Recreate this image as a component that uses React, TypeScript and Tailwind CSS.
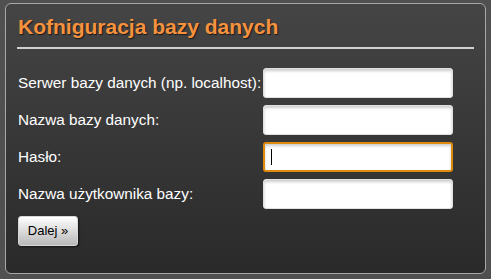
import React from "react";

const rows = [
  { label: "Serwer bazy danych (np. localhost):", focus: false },
  { label: "Nazwa bazy danych:", focus: false },
  { label: "Hasło:", focus: true },
  { label: "Nazwa użytkownika bazy:", focus: false },
];

export default function App() {
  return (
    <div className="w-[491px] h-[279px] bg-[#505050] pt-[3px] pl-[5px] pr-[5px] pb-[5px]" style={{ fontFamily: '"Liberation Sans", Arial, sans-serif' }}>
      <div className="w-full h-full rounded-[6px] border border-[#a8a8a8] bg-gradient-to-b from-[#454545] to-[#2a2a2a] pl-[11px] pr-[11px] pt-[9px]">
        <h1 className="text-[21px] font-bold text-[#f6923e] leading-[28px] pl-[1px] [text-shadow:1px_1px_1px_#1a1a1a]">
          Kofniguracja bazy danych
        </h1>
        <div className="h-[2px] bg-[#d0d0d0] mt-[6px] mb-[19px]" />
        <div className="flex flex-col gap-[7px] pl-[1px]">
          {rows.map((r) => (
            <div key={r.label} className="flex items-center">
              <label className="w-[245px] text-[15.3px] text-white leading-[18px] whitespace-nowrap">{r.label}</label>
              <div
                className={
                  r.focus
                    ? "w-[190px] h-[30px] rounded-[3px] bg-white border-2 border-[#de8a0c] shadow-[inset_0_2px_3px_rgba(0,0,0,0.2)] flex items-center pl-[6px]"
                    : "w-[190px] h-[30px] rounded-[3px] bg-white border border-[#e0e0e0] shadow-[inset_0_2px_3px_rgba(0,0,0,0.2)]"
                }
              >
                {r.focus && <div className="w-[1px] h-[16px] bg-black" />}
              </div>
            </div>
          ))}
        </div>
        <button className="mt-[7px] ml-[1px] w-[60px] h-[30px] rounded-[3px] bg-gradient-to-b from-[#ffffff] to-[#b8b8b8] text-[13px] text-black shadow-[1px_1px_2px_rgba(0,0,0,0.6)] border border-[#d8d8d8]">
          Dalej »
        </button>
      </div>
    </div>
  );
}
